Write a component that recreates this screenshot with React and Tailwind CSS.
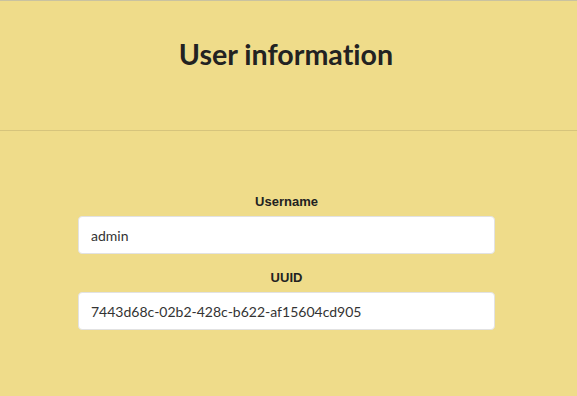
export default function App() {
  return (
    <div className="min-h-[396px] w-full bg-[#efdc8a] border-t border-[#c9c2a0] font-['Lato',sans-serif] text-[#222]">
      <header className="h-[130px] flex items-center justify-center border-b border-[#d6c47c] pb-[22px] pr-[5px]">
        <h1 className="text-[28.6px] font-bold [font-variant-ligatures:none]">User information</h1>
      </header>
      <main className="w-[417px] ml-[78px] pt-[63px] flex flex-col">
        <label className="text-center text-[13px] font-bold font-['Liberation_Sans',sans-serif] leading-4 mb-[6px]">
          Username
        </label>
        <input
          readOnly
          value="admin"
          className="h-[38px] bg-white border border-[#e2e2e2] rounded-[4px] px-[12px] text-[14px] text-[#333] outline-none"
        />
        <label className="text-center text-[13px] font-bold font-['Liberation_Sans',sans-serif] leading-4 mt-[16px] mb-[6px]">
          UUID
        </label>
        <input
          readOnly
          value="7443d68c-02b2-428c-b622-af15604cd905"
          className="h-[38px] bg-white border border-[#e2e2e2] rounded-[4px] px-[12px] text-[14px] text-[#333] outline-none"
        />
      </main>
    </div>
  );
}
